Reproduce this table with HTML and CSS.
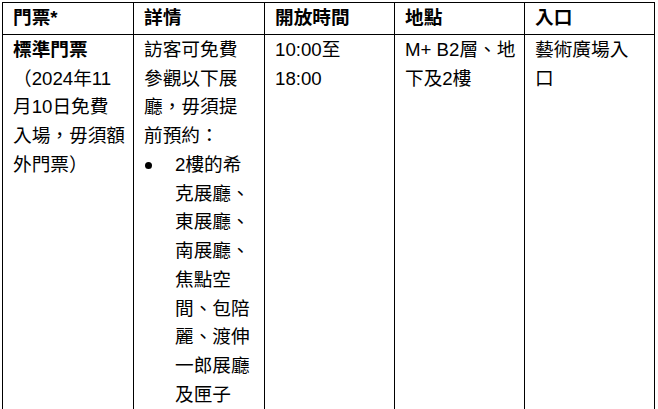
FILE: index.html
```html
<!DOCTYPE html>
<html lang="zh-Hant">
<head>
<meta charset="utf-8">
<title>門票</title>
<link rel="stylesheet" href="styles.css">
</head>
<body>
<div class="page">
  <table class="tickets">
    <colgroup>
      <col class="col-a">
      <col class="col-b">
      <col class="col-c">
      <col class="col-c">
      <col class="col-c">
    </colgroup>
    <thead>
      <tr>
        <th class="cell-ticket">門票*</th>
        <th class="cell-detail">詳情</th>
        <th>開放時間</th>
        <th>地點</th>
        <th>入口</th>
      </tr>
    </thead>
    <tbody>
      <tr>
        <td class="cell-ticket"><strong>標準門票</strong><br>（2024年11月10日免費入場，毋須額外門票）</td>
        <td class="cell-detail">
          <p class="detail-intro">訪客可免費參觀以下展廳，毋須提前預約：</p>
          <ul class="detail-list">
            <li>2樓的希克展廳、東展廳、南展廳、焦點空間、包陪麗、渡伸一郎展廳及匣子</li>
          </ul>
        </td>
        <td>10:00至18:00</td>
        <td>M+ B2層、地下及2樓</td>
        <td>藝術廣場入口</td>
      </tr>
    </tbody>
  </table>
</div>
</body>
</html>
```
FILE: styles.css
```css
html, body {
  margin: 0;
  background: #ffffff;
}

body {
  font-family: "Liberation Sans", "Noto Sans CJK TC", sans-serif;
  font-size: 18.67px;
  line-height: 28.75px;
  color: #000000;
  text-spacing-trim: space-all;
}

.page {
  padding: 2px 0 0 2px;
}

.tickets {
  border-collapse: collapse;
  table-layout: fixed;
  width: 653px;
}

.col-a,
.col-b {
  width: 131px;
}

.col-c {
  width: 130px;
}

.tickets th,
.tickets td {
  border: 1px solid #000000;
  padding: 1px 8px 1px 10px;
  text-align: left;
  vertical-align: top;
}

.tickets th {
  font-weight: bold;
}

.tickets td {
  padding-bottom: 40px;
}

.tickets .cell-ticket {
  padding-right: 6px;
}

.tickets .cell-detail {
  padding-right: 11px;
}

.tickets strong {
  font-weight: bold;
}

.detail-intro {
  margin: 0;
}

.detail-list {
  margin: 0;
  padding: 0;
  list-style: none;
}

.detail-list li {
  display: grid;
  grid-template-columns: 31px 1fr;
}

.detail-list li::before {
  content: "";
  width: 7px;
  height: 7px;
  margin: 11px 0 0 1px;
  border-radius: 50%;
  background: #000000;
}
```
